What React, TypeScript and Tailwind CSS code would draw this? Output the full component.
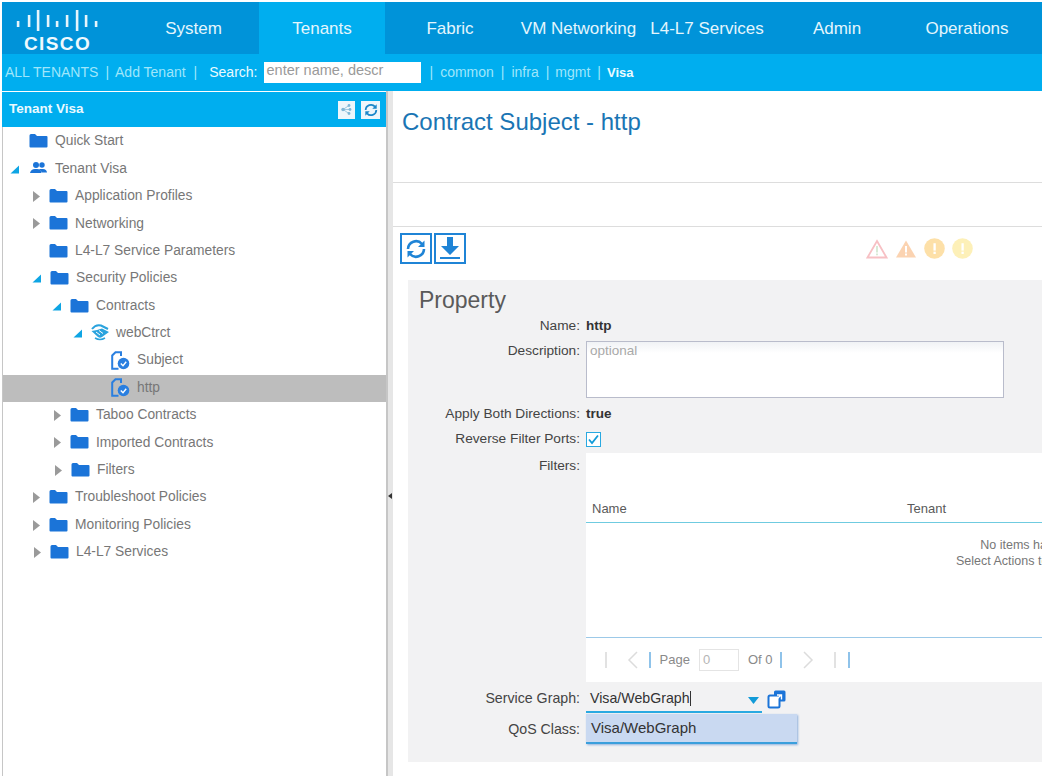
import React from "react";

const FONT = "font-['Liberation_Sans',Arial,sans-serif]";

function Folder() {
  return (
    <svg width="19" height="15" viewBox="0 0 19 15" className="mt-[-2px] shrink-0">
      <path d="M0.5 2.5 Q0.5 1 2 1 H6 L8 3 H17.5 Q18.5 3 18.5 4 V13.5 Q18.5 14.5 17.5 14.5 H1.5 Q0.5 14.5 0.5 13.5 Z" fill="#1b74d8" />
    </svg>
  );
}

function Tenant() {
  return (
    <svg width="19" height="14" viewBox="0 0 19 14" className="mt-[-3px] ml-[1px] shrink-0">
      <circle cx="7" cy="4" r="3" fill="#1b74d8" />
      <circle cx="13" cy="4" r="2.7" fill="#1b74d8" />
      <path d="M1 12 Q2 8 6 8 H8 Q12 8 12.5 12 Z" fill="#1b74d8" />
      <path d="M10 8 H14 Q17.5 8 18 11.5 H13 Z" fill="#1b74d8" />
    </svg>
  );
}

function Handshake() {
  return (
    <svg width="18" height="17" viewBox="0 0 18 17" className="mt-[-2px] shrink-0">
      <path d="M1 5 Q5 0 10 1.5 L17 5" stroke="#2aa3de" strokeWidth="2" fill="none" />
      <path d="M0.5 7 L7 13 Q9 14.5 11 13 L18 8 L11 4.5 L6 6 Z" fill="#2aa3de" />
      <path d="M5 8 L9 11 M8 6.5 L12 9.5" stroke="#fff" strokeWidth="1" />
      <path d="M4 14 Q9 17 14 14" stroke="#2aa3de" strokeWidth="1.5" fill="none" />
    </svg>
  );
}

function Subject() {
  return (
    <svg width="19" height="19" viewBox="0 0 19 19" className="mt-[-1px] shrink-0">
      <path d="M10 5 V1.2 H4.5 L1.2 4.5 V17.8 H7.5" stroke="#2a7fe0" strokeWidth="2" fill="none" />
      <circle cx="12.5" cy="12.5" r="5.8" fill="#2a7fe0" />
      <path d="M9.8 12.5 L12 14.7 L15.2 10.8" stroke="#fff" strokeWidth="1.4" fill="none" />
    </svg>
  );
}

function Caret({ kind }: { kind: "open" | "closed" | "none" }) {
  if (kind === "open")
    return (
      <svg width="9" height="9" viewBox="0 0 9 9" className="mr-[9px] shrink-0">
        <path d="M9 0.5 V8.5 H0.5 Z" fill="#0ea5e4" />
      </svg>
    );
  if (kind === "closed")
    return (
      <svg width="7" height="11" viewBox="0 0 7 11" className="mr-[9px] shrink-0">
        <path d="M0 0 L7 5.5 L0 11 Z" fill="#9a9a9a" />
      </svg>
    );
  return null;
}

type Row = {
  label: string;
  left: number;
  caret: "open" | "closed" | "none";
  icon: "folder" | "tenant" | "shake" | "subject";
  selected?: boolean;
};

const rows: Row[] = [
  { label: "Quick Start", left: 29, caret: "none", icon: "folder" },
  { label: "Tenant Visa", left: 10, caret: "open", icon: "tenant" },
  { label: "Application Profiles", left: 33, caret: "closed", icon: "folder" },
  { label: "Networking", left: 33, caret: "closed", icon: "folder" },
  { label: "L4-L7 Service Parameters", left: 49, caret: "none", icon: "folder" },
  { label: "Security Policies", left: 32, caret: "open", icon: "folder" },
  { label: "Contracts", left: 52, caret: "open", icon: "folder" },
  { label: "webCtrct", left: 73, caret: "open", icon: "shake" },
  { label: "Subject", left: 111, caret: "none", icon: "subject" },
  { label: "http", left: 111, caret: "none", icon: "subject", selected: true },
  { label: "Taboo Contracts", left: 54, caret: "closed", icon: "folder" },
  { label: "Imported Contracts", left: 54, caret: "closed", icon: "folder" },
  { label: "Filters", left: 55, caret: "closed", icon: "folder" },
  { label: "Troubleshoot Policies", left: 33, caret: "closed", icon: "folder" },
  { label: "Monitoring Policies", left: 33, caret: "closed", icon: "folder" },
  { label: "L4-L7 Services", left: 34, caret: "closed", icon: "folder" },
];

function TreeRow({ row }: { row: Row }) {
  return (
    <div
      className={`flex h-[27.4px] items-center text-[13.8px] text-[#777777] ${row.selected ? "bg-[#bdbdbd]" : ""}`}
      style={{ paddingLeft: row.left - 3 }}
    >
      <Caret kind={row.caret} />
      {row.icon === "folder" && <Folder />}
      {row.icon === "tenant" && <Tenant />}
      {row.icon === "shake" && <Handshake />}
      {row.icon === "subject" && <Subject />}
      <span className="ml-[7px] whitespace-nowrap">{row.label}</span>
    </div>
  );
}

function Logo() {
  const bars = [
    [18, 21, 27],
    [29, 15, 27],
    [38, 10, 31],
    [48, 15, 27],
    [57, 21, 27],
    [67, 15, 27],
    [77, 10, 31],
    [86, 15, 27],
    [96, 21, 27],
  ];
  return (
    <div className="flex w-[130px] shrink-0 flex-col items-start">
      <svg width="110" height="24" viewBox="0 8 110 24" className="mt-[6px] ml-[-2px]">
        {bars.map(([x, a, b]) => (
          <rect key={x} x={x - 1.2} y={a} width="2.6" height={b - a} fill="#e6f5fc" />
        ))}
      </svg>
      <span className="ml-[22px] mt-[2.5px] text-[19px] font-bold leading-[18px] tracking-[1.4px] text-[#eef9fe]">CISCO</span>
    </div>
  );
}

const nav = [
  ["System", 127],
  ["Tenants", 126],
  ["Fabric", 130],
  ["VM Networking", 127],
  ["L4-L7 Services", 130],
  ["Admin", 130],
  ["Operations", 130],
] as const;

function RefreshGlyph({ size, color }: { size: number; color: string }) {
  return (
    <svg width={size} height={size} viewBox="0 0 24 24" fill="none">
      <path d="M4 12 A8 8 0 0 1 18 7" stroke={color} strokeWidth="2.6" />
      <path d="M20 12 A8 8 0 0 1 6 17" stroke={color} strokeWidth="2.6" />
      <path d="M20.5 3.5 V10 H14 Z" fill={color} />
      <path d="M3.5 20.5 V14 H10 Z" fill={color} />
    </svg>
  );
}

function Label({ children, className = "" }: { children: React.ReactNode; className?: string }) {
  return <div className={`w-[172px] shrink-0 text-right text-[13.7px] text-[#444444] ${className}`}>{children}</div>;
}

export default function App() {
  return (
    <div className={`${FONT} h-[776px] w-[1042px] overflow-hidden bg-white pt-[2px] pl-[2px]`}>
      <div className="flex h-[52px] bg-[#0093d9] text-[17px] text-[#e4f6fd]">
        <Logo />
        {nav.map(([label, w]) => (
          <div
            key={label}
            className={`flex shrink-0 items-center justify-center whitespace-nowrap pt-[2px] ${label === "Tenants" ? "bg-[#00aeef]" : ""} ${label === "System" ? "pr-[4px]" : ""}`}
            style={{ width: w }}
          >
            {label}
          </div>
        ))}
      </div>
      <div className="flex h-[37px] items-center bg-[#00aeef] pl-[3px] text-[14px] text-[#9fe6fb]">
        <span>ALL TENANTS</span>
        <span className="ml-[7px]">|</span>
        <span className="ml-[6px]">Add Tenant</span>
        <span className="ml-[8px]">|</span>
        <span className="ml-[12px] text-[#e9fbff]">Search:</span>
        <div className="ml-[6px] h-[21px] w-[157px] bg-white pl-[3px] text-[14.5px] leading-[17px] text-[#9a9a9a]">enter name, descr</div>
        <span className="ml-[9px]">|</span>
        <span className="ml-[7px]">common</span>
        <span className="ml-[7px]">|</span>
        <span className="ml-[7px]">infra</span>
        <span className="ml-[7px]">|</span>
        <span className="ml-[6px]">mgmt</span>
        <span className="ml-[7px]">|</span>
        <span className="ml-[6px] text-[13px] font-bold text-[#e9fbff]">Visa</span>
      </div>

      <div className="flex h-[685px]">
        <aside className="flex w-[386px] shrink-0 flex-col border-r-[2px] border-[#c6c6c6] pt-[1px]">
          <div className="flex h-[35px] shrink-0 items-center justify-between bg-[#00aeef] pl-[7px] pr-[6px] text-[13.5px] font-bold text-[#eafaff]">
            <span>Tenant Visa</span>
            <div className="flex items-center gap-[6px]">
              <div className="flex h-[18px] w-[17px] items-center justify-center bg-[#eef6fb]">
                <svg width="13" height="13" viewBox="0 0 13 13">
                  <circle cx="3" cy="6.5" r="1.7" fill="#7fb6d6" />
                  <circle cx="9" cy="2.5" r="1.4" fill="#7fb6d6" />
                  <circle cx="10" cy="6.5" r="1.4" fill="#7fb6d6" />
                  <circle cx="9" cy="10.5" r="1.4" fill="#7fb6d6" />
                  <path d="M3 6.5 L9 2.5 M3 6.5 H10 M3 6.5 L9 10.5" stroke="#7fb6d6" strokeWidth="0.7" />
                </svg>
              </div>
              <div className="flex h-[18px] w-[19px] items-center justify-center bg-[#eef6fb]">
                <RefreshGlyph size={16} color="#1b87c9" />
              </div>
            </div>
          </div>
          <div className="flex-1 border-l-[1px] border-[#c6c6c6] pt-[1px]">
            {rows.map((r) => (
              <TreeRow key={r.label} row={r} />
            ))}
          </div>
        </aside>

        <div className="flex w-[5px] shrink-0 items-center bg-[#e6e6e6]">
          <svg width="4" height="6" viewBox="0 0 4 6" className="mt-[124px]">
            <path d="M4 0 V6 L0 3 Z" fill="#333" />
          </svg>
        </div>

        <main className="min-w-0 flex-1">
          <h1 className="pl-[9px] pt-[17px] text-[24px] leading-[28px] text-[#1a75b4]">Contract Subject - http</h1>
          <div className="mt-[46px] h-[1px] bg-[#dddddd]" />
          <div className="mt-[43px] h-[1px] bg-[#dddddd]" />
          <div className="flex h-[53px] items-start pl-[7px] pt-[6px]">
            <div className="flex h-[31px] w-[32px] items-center justify-center border-[2px] border-[#1f84d6]">
              <RefreshGlyph size={24} color="#1f84d6" />
            </div>
            <div className="ml-[2px] flex h-[31px] w-[32px] items-center justify-center border-[2px] border-[#1f84d6]">
              <svg width="24" height="25" viewBox="0 0 24 25">
                <path d="M9 1 H15 V10 H21 L12 19 L3 10 H9 Z" fill="#1f84d6" />
                <rect x="2" y="21" width="20" height="2" fill="#1f84d6" />
              </svg>
            </div>
            <div className="ml-[400px] mt-[5px] flex items-center gap-[7px]">
              <svg width="22" height="20" viewBox="0 0 22 20">
                <path d="M11 2 L20.5 18.5 H1.5 Z" fill="#fff" stroke="#f7c0c4" strokeWidth="1.8" />
                <rect x="10.2" y="7" width="1.6" height="6.5" fill="#cfe5cc" />
                <rect x="10.2" y="14.5" width="1.6" height="1.8" fill="#cfe5cc" />
              </svg>
              <svg width="22" height="20" viewBox="0 0 22 20">
                <path d="M11 1.5 L21 18.5 H1 Z" fill="#fbd3b1" />
                <rect x="10" y="7" width="2" height="6.5" fill="#fff" />
                <rect x="10" y="14.5" width="2" height="2" fill="#fff" />
              </svg>
              <svg width="21" height="21" viewBox="0 0 20 20">
                <circle cx="10" cy="10" r="9.8" fill="#fde0a8" />
                <rect x="9" y="5" width="2.2" height="7" fill="#fff" />
                <rect x="9" y="13" width="2.2" height="2.2" fill="#fff" />
              </svg>
              <svg width="21" height="21" viewBox="0 0 20 20">
                <circle cx="10" cy="10" r="9.8" fill="#fdf0b8" />
                <rect x="9" y="5" width="2.2" height="7" fill="#fff" />
                <rect x="9" y="13" width="2.2" height="2.2" fill="#fff" />
              </svg>
            </div>
          </div>

          <section className="relative ml-[15px] h-[482px] bg-[#f2f2f3]">
            <h2 className="pl-[11px] pt-[7px] text-[23px] leading-[27px] text-[#5a5a5a]">Property</h2>
            <div className="flex h-[24px] items-center pt-[1px]">
              <Label>Name:</Label>
              <span className="ml-[6px] text-[13.5px] font-bold text-[#333]">http</span>
            </div>
            <div className="flex h-[64px] items-start pt-[3px]">
              <Label>Description:</Label>
              <div className="ml-[6px] h-[57px] w-[418px] border border-[#b9bccb] bg-white bg-gradient-to-b from-[#f0f2f5] to-white to-[20%] pl-[3px] text-[13.5px] leading-[18px] text-[#a9a9a9]">optional</div>
            </div>
            <div className="flex h-[24px] items-center pt-[1px]">
              <Label>Apply Both Directions:</Label>
              <span className="ml-[6px] text-[13.5px] font-bold text-[#333]">true</span>
            </div>
            <div className="flex h-[27px] items-center">
              <Label>Reverse Filter Ports:</Label>
              <div className="ml-[6px] flex h-[15px] w-[15px] items-center justify-center border-[1.5px] border-[#29a9e1] bg-white">
                <svg width="11" height="11" viewBox="0 0 11 11">
                  <path d="M1 5.5 L4 9 L10 1.5" stroke="#129bd8" strokeWidth="1.8" fill="none" />
                </svg>
              </div>
            </div>
            <div className="flex h-[229px]">
              <Label className="pt-[3px]">Filters:</Label>
              <div className="ml-[6px] flex flex-1 flex-col overflow-hidden bg-white text-[#5a5a5a]">
                <div className="flex h-[70px] shrink-0 items-end border-b-[1.5px] border-[#6fcbe0] pb-[4px] text-[13px]">
                  <span className="w-[321px] pl-[6px]">Name</span>
                  <span>Tenant</span>
                </div>
                <div className="h-[114px] w-[938px] shrink-0 pt-[14px] text-center text-[12.5px] leading-[16px] text-[#777]">
                  <div>No items have been found.</div>
                  <div>Select Actions to create a new item.</div>
                </div>
                <div className="flex flex-1 items-center border-t-[1px] border-[#9cc9e8] pl-[19px] text-[13px] text-[#8a8a8a]">
                  <span className="h-[16px] w-[2px] bg-[#e2e2e2]" />
                  <svg width="12" height="18" viewBox="0 0 12 18" className="ml-[20px]">
                    <path d="M10 1 L2 9 L10 17" stroke="#dcdcdc" strokeWidth="1.5" fill="none" />
                  </svg>
                  <span className="ml-[10px] h-[16px] w-[1.5px] bg-[#8fc3ea]" />
                  <span className="ml-[9px]">Page</span>
                  <div className="ml-[9px] h-[22px] w-[40px] border border-[#e4e4e4] pl-[3px] leading-[20px] text-[#b5b5b5]">0</div>
                  <span className="ml-[9px]">Of 0</span>
                  <span className="ml-[8px] h-[16px] w-[1.5px] bg-[#8fc3ea]" />
                  <svg width="12" height="18" viewBox="0 0 12 18" className="ml-[20px]">
                    <path d="M2 1 L10 9 L2 17" stroke="#dcdcdc" strokeWidth="1.5" fill="none" />
                  </svg>
                  <span className="ml-[20px] h-[16px] w-[2px] bg-[#e2e2e2]" />
                  <span className="ml-[12px] h-[16px] w-[2px] bg-[#8fc3ea]" />
                </div>
              </div>
            </div>
            <div className="mt-[2px] flex h-[29px] items-center">
              <Label className="pt-[1px] text-[14.2px]">Service Graph:</Label>
              <div className="relative ml-[6px] flex h-[29px] w-[176px] items-center border-b-[2px] border-[#29a9e1] pl-[4px] pt-[2px] text-[14.2px] text-[#333]">
                Visa/WebGraph<span className="h-[15px] w-[1px] bg-[#333]" />
                <svg width="11" height="7" viewBox="0 0 11 7" className="absolute right-[3px] top-[13px]">
                  <path d="M0 0 H11 L5.5 7 Z" fill="#129bd8" />
                </svg>
              </div>
              <svg width="20" height="20" viewBox="0 0 20 20" className="ml-[5px]">
                <rect x="7" y="1.5" width="11.5" height="11" rx="1.5" fill="#1b74d8" />
                <rect x="1.5" y="6.5" width="11" height="12" rx="1.5" fill="#fff" stroke="#1b74d8" strokeWidth="2" />
                <path d="M10 6 L14.5 6 V10.5 M9 11 L14 6" stroke="#fff" strokeWidth="1.4" fill="none" />
              </svg>
            </div>
            <div className="flex h-[30px] items-center pt-[3px]">
              <Label className="text-[14.2px]">QoS Class:</Label>
            </div>
            <div className="absolute left-[178px] top-[434px] flex h-[30px] w-[211px] items-center border-b-[2px] border-[#3a9fdc] bg-[#c9d9f1] pl-[5px] pt-[1px] text-[15px] text-[#333] shadow-[1px_1px_2px_#8fb0dc]">
              Visa/WebGraph
            </div>
          </section>
        </main>
      </div>
    </div>
  );
}
